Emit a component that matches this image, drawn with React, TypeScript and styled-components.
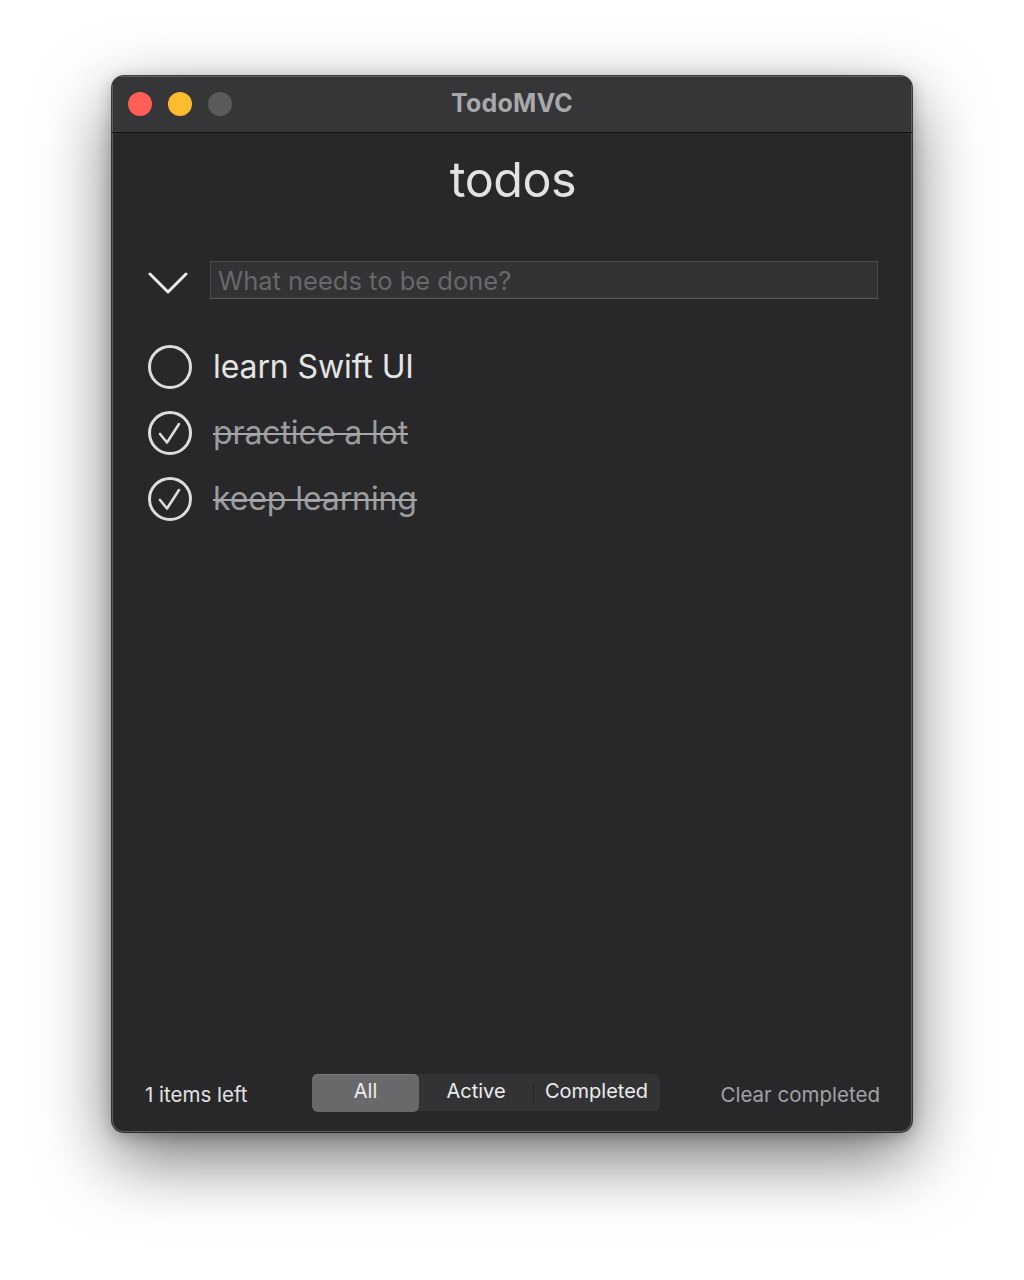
import React from "react";
import styled, { createGlobalStyle } from "styled-components";

const Global = createGlobalStyle`
  html, body { margin: 0; padding: 0; background: #ffffff; }
  body { font-family: Inter, "Noto Sans", sans-serif; -webkit-font-smoothing: antialiased; }
  * { box-sizing: border-box; }
`;

const Page = styled.div`
  width: 1024px;
  height: 1280px;
  display: flex;
  justify-content: center;
  padding-top: 76px;
`;

const Window = styled.div`
  width: 800px;
  height: 1056px;
  border-radius: 12px;
  background: #28282a;
  display: flex;
  flex-direction: column;
  overflow: hidden;
  box-shadow: 0 0 0 1px rgba(0, 0, 0, 0.7), inset 0 0 0 1px #5e5e60,
    0 26px 70px rgba(0, 0, 0, 0.55), 0 4px 16px rgba(0, 0, 0, 0.25);
`;

const TitleBar = styled.div`
  height: 57px;
  flex: none;
  background: #363638;
  border-bottom: 1px solid #141414;
  position: relative;
  display: flex;
  align-items: center;
  justify-content: center;
  box-shadow: inset 0 1px 0 #5e5e60, inset 1px 0 0 #5e5e60, inset -1px 0 0 #5e5e60;
`;

const Lights = styled.div`
  position: absolute;
  left: 16px;
  top: 16px;
  display: flex;
  gap: 16px;
`;

const Light = styled.span<{ $c: string }>`
  width: 24px;
  height: 24px;
  border-radius: 50%;
  background: ${(p) => p.$c};
`;

const Title = styled.div`
  font-size: 25px;
  font-weight: 700;
  color: #a9a9ab;
  letter-spacing: 0.2px;
  margin-top: -2px;
`;

const Body = styled.div`
  flex: 1;
  display: flex;
  flex-direction: column;
  padding: 0 34px 0 36px;
`;

const Heading = styled.h1`
  margin: 18px 0 0;
  text-align: center;
  font-size: 48.5px;
  font-weight: 400;
  color: #e2e2e2;
  line-height: 58px;
  letter-spacing: -0.5px;
`;

const InputRow = styled.div`
  margin-top: 52px;
  display: flex;
  align-items: center;
  gap: 22px;
  height: 38px;
`;

const Chevron = styled.svg`
  width: 40px;
  height: 28px;
  flex: none;
  margin-top: 1px;
`;

const Input = styled.input`
  flex: 1;
  height: 38px;
  background: #333335;
  border: 1px solid #4c4c4e;
  border-bottom-color: #5a5a5c;
  color: #e0e0e0;
  font-family: Inter, "Noto Sans", sans-serif;
  font-size: 25.5px;
  padding: 0 7px;
  outline: none;
  &::placeholder { color: #68686a; }
`;

const List = styled.ul`
  list-style: none;
  margin: 35px 0 0;
  padding: 0;
  display: flex;
  flex-direction: column;
`;

const Item = styled.li`
  height: 66px;
  display: flex;
  align-items: center;
  gap: 20px;
`;

const Check = styled.svg`
  width: 46px;
  height: 46px;
  flex: none;
  margin-left: -1px;
`;

const ItemText = styled.span<{ $done: boolean }>`
  font-size: 32px;
  letter-spacing: -0.1px;
  color: ${(p) => (p.$done ? "#9c9c9e" : "#e4e4e4")};
  text-decoration: ${(p) => (p.$done ? "line-through" : "none")};
  text-decoration-color: #a8a8aa;
  text-decoration-thickness: 2px;
  margin-top: -2px;
`;

const Spacer = styled.div`
  flex: 1;
`;

const Footer = styled.div`
  height: 38px;
  margin: 0 -2px 20px -3px;
  display: flex;
  align-items: center;
  justify-content: space-between;
`;

const Count = styled.span`
  font-size: 20.5px;
  color: #e2e2e2;
  width: 167px;
  margin-top: 2px;
`;

const Segmented = styled.div`
  display: flex;
  height: 38px;
  width: 348px;
  background: #333335;
  border-radius: 6px;
  box-shadow: inset 0 -1px 0 #2a2a2c;
  margin-right: auto;
`;

const Segment = styled.button<{ $active?: boolean; $divider?: boolean }>`
  border: none;
  font-family: Inter, "Noto Sans", sans-serif;
  font-size: 20px;
  color: #ececec;
  height: 100%;
  padding: 0 0 5px;
  background: ${(p) => (p.$active ? "#69696b" : "transparent")};
  border-radius: 6px;
  box-shadow: ${(p) => (p.$active ? "inset 0 1px 0 #7a7a7c" : "none")};
  position: relative;
  &::before {
    content: "";
    display: ${(p) => (p.$divider ? "block" : "none")};
    position: absolute;
    left: 0;
    top: 9px;
    bottom: 9px;
    width: 1px;
    background: #262628;
  }
`;

const Clear = styled.span`
  font-size: 20.5px;
  color: #a2a2a4;
  margin-top: 2px;
`;

export default function App() {
  const todos = [
    { text: "learn Swift UI", done: false },
    { text: "practice a lot", done: true },
    { text: "keep learning", done: true },
  ];
  return (
    <>
      <Global />
      <Page>
        <Window>
          <TitleBar>
            <Lights>
              <Light $c="#fe5f57" />
              <Light $c="#febc2e" />
              <Light $c="#5a5a5c" />
            </Lights>
            <Title>TodoMVC</Title>
          </TitleBar>
          <Body>
            <Heading>todos</Heading>
            <InputRow>
              <Chevron viewBox="0 0 40 28">
                <polyline
                  points="2,7 20,25 38,7"
                  fill="none"
                  stroke="#ececec"
                  strokeWidth="3"
                  strokeLinecap="round"
                  strokeLinejoin="round"
                />
              </Chevron>
              <Input placeholder="What needs to be done?" />
            </InputRow>
            <List>
              {todos.map((t) => (
                <Item key={t.text}>
                  <Check viewBox="0 0 46 46">
                    <circle cx="23" cy="23" r="20.5" fill="none" stroke="#dcdcdc" strokeWidth="3" />
                    {t.done && (
                      <polyline
                        points="13,24 20,32.5 32,14"
                        fill="none"
                        stroke="#dcdcdc"
                        strokeWidth="2.6"
                        strokeLinecap="round"
                        strokeLinejoin="round"
                      />
                    )}
                  </Check>
                  <ItemText $done={t.done}>{t.text}</ItemText>
                </Item>
              ))}
            </List>
            <Spacer />
            <Footer>
              <Count>1 items left</Count>
              <Segmented>
                <Segment $active style={{ width: 107 }}>All</Segment>
                <Segment style={{ width: 114 }}>Active</Segment>
                <Segment $divider style={{ width: 127 }}>Completed</Segment>
              </Segmented>
              <Clear>Clear completed</Clear>
            </Footer>
          </Body>
        </Window>
      </Page>
    </>
  );
}
